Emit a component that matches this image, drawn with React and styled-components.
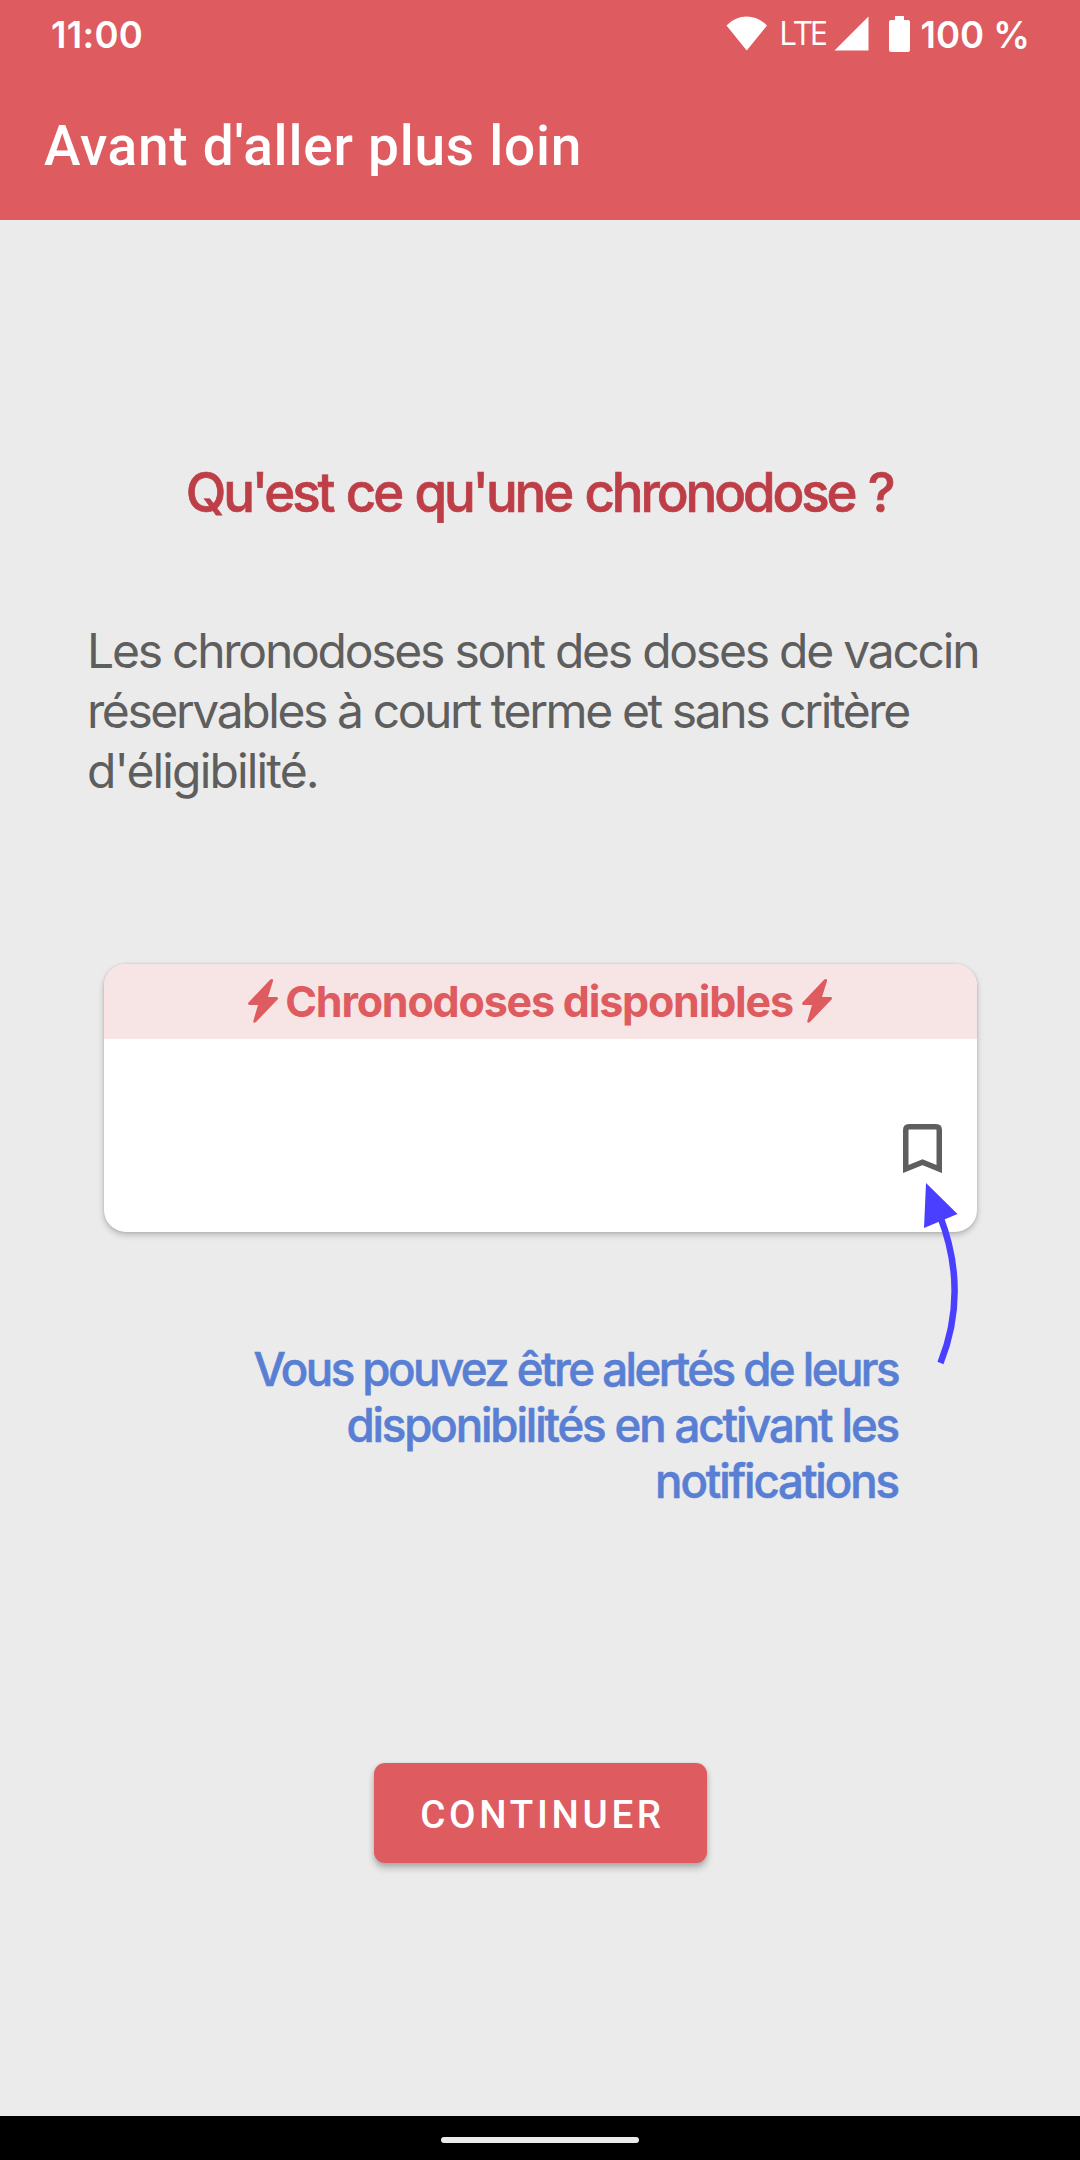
import React from "react";
import styled, { createGlobalStyle } from "styled-components";

const GlobalStyle = createGlobalStyle`
  * { box-sizing: border-box; }
  body { margin: 0; background: #ebebeb; }
  h1, h2, p { margin: 0; font-weight: inherit; }
`;

const Screen = styled.div`
  display: flex;
  flex-direction: column;
  width: 1080px;
  height: 2160px;
  overflow: hidden;
  background: #ebebeb;
  font-family: Inter, "Liberation Sans", sans-serif;
`;

const Header = styled.header`
  height: 220px;
  background: #de5b60;
  color: #fff;
`;

const StatusBar = styled.div`
  display: flex;
  align-items: center;
  justify-content: space-between;
  height: 66px;
  padding: 1px 50px 0 51px;
  font: 600 36.5px/44px Inter, sans-serif;
`;

const Clock = styled.span`
  padding-top: 2px;
  letter-spacing: 0.3px;
`;

const StatusIcons = styled.div`
  display: flex;
  align-items: center;
`;

const Network = styled.span`
  margin: 0 8px 0 11px;
  padding-bottom: 2px;
  font: 400 33px/40px "Open Sans", sans-serif;
  letter-spacing: -2.4px;
`;

const Battery = styled.span`
  padding-top: 2px;
  margin-left: 11px;
`;

const AppTitle = styled.h1`
  padding: 48px 44px 0;
  font: 500 55px/64px Roboto, sans-serif;
  letter-spacing: 0.76px;
`;

const Content = styled.main`
  display: flex;
  flex: 1;
  flex-direction: column;
  align-items: center;
`;

const Question = styled.h2`
  margin-top: 239px;
  margin-right: 2px;
  color: #bd3e47;
  font-size: 55px;
  font-weight: 500;
  line-height: 66px;
  letter-spacing: -3.25px;
  word-spacing: 2.5px;
  white-space: nowrap;
  transform: scaleX(0.96);
  -webkit-text-stroke: 0.7px #bd3e47;
`;

const Line = styled.span`
  display: block;
  letter-spacing: ${({ $tracking }) => $tracking}px;
  white-space: nowrap;
`;

const Explanation = styled.p`
  width: 904px;
  margin-top: 96px;
  margin-right: 2px;
  color: #5e5e5e;
  font-size: 48px;
  line-height: 60px;
`;

const Card = styled.section`
  width: 873px;
  height: 268px;
  margin-top: 163px;
  overflow: hidden;
  border-radius: 22px;
  background: #fff;
  box-shadow: 0 3px 6px rgba(0, 0, 0, 0.22), 0 0 3px rgba(0, 0, 0, 0.12);
`;

const CardHeader = styled.div`
  display: flex;
  align-items: center;
  justify-content: center;
  gap: 7px;
  height: 75px;
  padding-bottom: 1px;
  background: #f7e4e4;
  color: #de5b60;
`;

const CardTitle = styled.span`
  margin-right: 2px;
  font-size: 43px;
  font-weight: 700;
  line-height: 52px;
  letter-spacing: -1.2px;
  white-space: nowrap;
`;

const CardBody = styled.div`
  display: flex;
  justify-content: flex-end;
  padding: 85px 35px 0 0;
`;

const Hint = styled.div`
  position: relative;
  display: flex;
  justify-content: flex-end;
  width: 873px;
  margin-top: 109px;
  padding-right: 79px;
`;

const HintText = styled.p`
  width: 680px;
  color: #587fd3;
  font-size: 47px;
  font-weight: 500;
  line-height: 56px;
  text-align: right;
  transform: scaleX(0.97);
  transform-origin: right center;
  -webkit-text-stroke: 0.6px #587fd3;
`;

const HintArrow = styled.svg`
  position: absolute;
  top: -161px;
  right: 17px;
`;

const ContinueButton = styled.button`
  width: 333px;
  height: 100px;
  margin-top: 254px;
  padding: 4px 0 0 5px;
  border: 0;
  border-radius: 11px;
  background: #de5b60;
  box-shadow: 0 5px 7px rgba(0, 0, 0, 0.24), 0 1px 4px rgba(0, 0, 0, 0.1);
  color: #fff;
  font: 500 38.5px/46px Roboto, sans-serif;
  letter-spacing: 3.7px;
`;

const NavigationBar = styled.nav`
  display: flex;
  align-items: center;
  justify-content: center;
  height: 44px;
  padding-top: 4px;
  background: #000;
`;

const HomeIndicator = styled.div`
  width: 198px;
  height: 6px;
  border-radius: 3px;
  background: #ebebeb;
`;

const WifiIcon = () => (
  <svg width="42" height="36" viewBox="0 0 42 36" fill="#fff">
    <path d="M0.500 9.500C12.500-2.500 29-2.500 41 9.500L20.700 34.500Z" />
  </svg>
);

const SignalIcon = () => (
  <svg width="35" height="36" viewBox="0 0 35 36" fill="#fff">
    <path d="M34.500 0.500V34.500H0.500Z" />
  </svg>
);

const BatteryIcon = styled(({ className }) => (
  <svg className={className} width="21" height="36" viewBox="0 0 21 36" fill="#fff">
    <path d="M6 0h9v4h4q2 0 2 2v28q0 2-2 2H2q-2 0-2-2V6q0-2 2-2h4Z" />
  </svg>
))`
  margin-left: 20px;
`;

const BoltIcon = () => (
  <svg width="30" height="44" viewBox="0 0 30 44" fill="currentColor">
    <path d="M22.300 0.500Q25.400-1 25 2L20 18H28.500Q31 18.500 29.500 20.500L8 43Q5.200 45 5.300 42L10 26H1.500Q-0.800 25.500 0.500 23.500Z" />
  </svg>
);

const BookmarkIcon = () => (
  <svg width="39" height="49" viewBox="0 0 39 49" fill="none">
    <path d="M2.750 45V6Q2.750 2.750 6 2.750H33Q36.250 2.750 36.250 6V45L19.500 38.300Z" stroke="#5e5e5e" strokeWidth="5.500" />
  </svg>
);

export default function App() {
  return (
    <>
      <GlobalStyle />
      <Screen>
        <Header>
          <StatusBar>
            <Clock>11:00</Clock>
            <StatusIcons>
              <WifiIcon />
              <Network>LTE</Network>
              <SignalIcon />
              <BatteryIcon />
              <Battery>100 %</Battery>
            </StatusIcons>
          </StatusBar>
          <AppTitle>Avant d'aller plus loin</AppTitle>
        </Header>
        <Content>
          <Question>Qu'est ce qu'une chronodose ?</Question>
          <Explanation>
            <Line $tracking={-2.24}>Les chronodoses sont des doses de vaccin </Line>
            <Line $tracking={-2.41}>réservables à court terme et sans critère </Line>
            <Line $tracking={-1.85}>d'éligibilité.</Line>
          </Explanation>
          <Card>
            <CardHeader>
              <BoltIcon />
              <CardTitle>Chronodoses disponibles</CardTitle>
              <BoltIcon />
            </CardHeader>
            <CardBody>
              <BookmarkIcon />
            </CardBody>
          </Card>
          <Hint>
            <HintText>
              <Line $tracking={-2.6}>Vous pouvez être alertés de leurs </Line>
              <Line $tracking={-2.19}>disponibilités en activant les </Line>
              <Line $tracking={-2.15}>notifications</Line>
            </HintText>
            <HintArrow width="40" height="190" viewBox="0 0 40 190">
              <path d="M6 3L37.500 34L4 48Z" fill="#4a3fff" />
              <path d="M20 36Q49 111 20.500 183" fill="none" stroke="#4a3fff" strokeWidth="6.500" />
            </HintArrow>
          </Hint>
          <ContinueButton>CONTINUER</ContinueButton>
        </Content>
        <NavigationBar>
          <HomeIndicator />
        </NavigationBar>
      </Screen>
    </>
  );
}
